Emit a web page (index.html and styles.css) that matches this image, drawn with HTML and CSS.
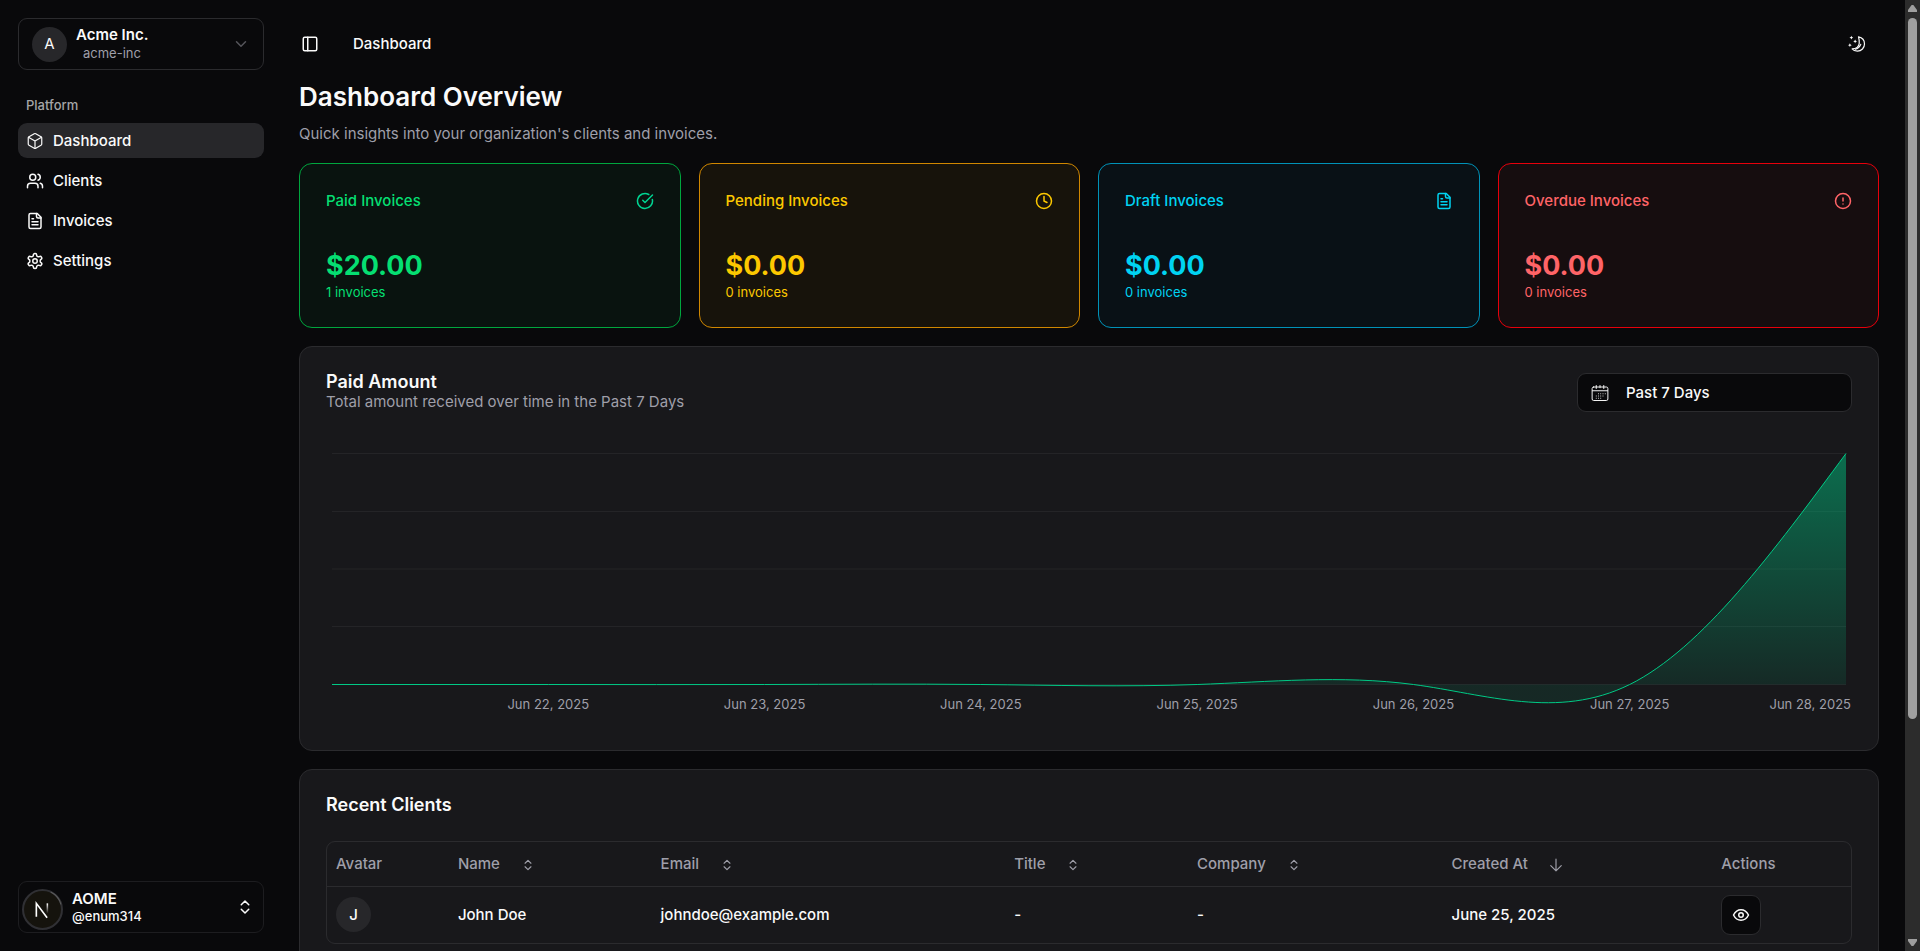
FILE: index.html
```html
<!DOCTYPE html>
<html lang="en">
<head>
<meta charset="utf-8">
<meta name="viewport" content="width=device-width, initial-scale=1">
<title>Dashboard</title>
<link rel="stylesheet" href="styles.css">
</head>
<body>
<svg class="sprite" aria-hidden="true">
  <symbol id="i-sort" viewBox="0 0 24 24"><path d="m7 15 5 5 5-5M7 9l5-5 5 5"/></symbol>
  <symbol id="i-file" viewBox="0 0 24 24"><path d="M15 2H6a2 2 0 0 0-2 2v16a2 2 0 0 0 2 2h12a2 2 0 0 0 2-2V7Z"/><path d="M14 2v4a2 2 0 0 0 2 2h4M10 9H8M16 13H8M16 17H8"/></symbol>
</svg>
<div class="app">
  <aside class="sidebar">
    <button class="org" type="button">
      <span class="avatar">A</span>
      <span class="org-text"><span class="strong">Acme Inc.</span><span class="org-slug">acme-inc</span></span>
      <svg class="icon dim" viewBox="0 0 24 24"><path d="m6 9 6 6 6-6"/></svg>
    </button>
    <nav class="nav">
      <h2 class="nav-label">Platform</h2>
      <a class="nav-item active" href="#"><svg class="icon thin" viewBox="0 0 24 24"><path d="M21 8a2 2 0 0 0-1-1.73l-7-4a2 2 0 0 0-2 0l-7 4A2 2 0 0 0 3 8v8a2 2 0 0 0 1 1.73l7 4a2 2 0 0 0 2 0l7-4A2 2 0 0 0 21 16Z"/><path d="m3.3 7 8.7 5 8.7-5M12 22V12"/></svg>Dashboard</a>
      <a class="nav-item" href="#"><svg class="icon" viewBox="0 0 24 24"><path d="M16 21v-2a4 4 0 0 0-4-4H6a4 4 0 0 0-4 4v2"/><circle cx="9" cy="7" r="4"/><path d="M22 21v-2a4 4 0 0 0-3-3.87M16 3.13a4 4 0 0 1 0 7.75"/></svg>Clients</a>
      <a class="nav-item" href="#"><svg class="icon"><use href="#i-file"/></svg>Invoices</a>
      <a class="nav-item" href="#"><svg class="icon" viewBox="0 0 24 24"><path d="M12.22 2h-.44a2 2 0 0 0-2 2v.18a2 2 0 0 1-1 1.73l-.43.25a2 2 0 0 1-2 0l-.15-.08a2 2 0 0 0-2.73.73l-.22.38a2 2 0 0 0 .73 2.73l.15.1a2 2 0 0 1 1 1.72v.51a2 2 0 0 1-1 1.74l-.15.09a2 2 0 0 0-.73 2.73l.22.38a2 2 0 0 0 2.73.73l.15-.08a2 2 0 0 1 2 0l.43.25a2 2 0 0 1 1 1.73V20a2 2 0 0 0 2 2h.44a2 2 0 0 0 2-2v-.18a2 2 0 0 1 1-1.73l.43-.25a2 2 0 0 1 2 0l.15.08a2 2 0 0 0 2.73-.73l.22-.39a2 2 0 0 0-.73-2.73l-.15-.08a2 2 0 0 1-1-1.74v-.5a2 2 0 0 1 1-1.74l.15-.09a2 2 0 0 0 .73-2.73l-.22-.38a2 2 0 0 0-2.73-.73l-.15.08a2 2 0 0 1-2 0l-.43-.25a2 2 0 0 1-1-1.73V4a2 2 0 0 0-2-2z"/><circle cx="12" cy="12" r="3"/></svg>Settings</a>
    </nav>
    <button class="user" type="button">
      <svg class="user-avatar" viewBox="0 0 40 40">
        <defs><linearGradient id="n-fade" x1="0" y1="0" x2="0" y2="1"><stop offset="0" stop-color="#fff"/><stop offset="1" stop-color="#fff" stop-opacity="0"/></linearGradient></defs>
        <circle cx="20" cy="20" r="19" fill="#15130d" stroke="#303034" stroke-width="2"/>
        <path d="M28 3a19 19 0 0 1 10 12" fill="none" stroke="#5b5b5b" stroke-width="1"/>
        <path d="M14 27V14L24.500 28" fill="none" stroke="#fff" stroke-width="1.600"/>
        <rect x="24" y="14" width="1.500" height="10" fill="url(#n-fade)"/>
      </svg>
      <span class="user-text"><span class="strong">AOME</span><span class="user-handle">@enum314</span></span>
      <svg class="icon"><use href="#i-sort"/></svg>
    </button>
  </aside>

  <main class="main">
    <header class="topbar">
      <button class="icon-btn" type="button" aria-label="Toggle sidebar"><svg class="icon" viewBox="0 0 24 24"><rect x="3" y="3" width="18" height="18" rx="2"/><path d="M9 3v18"/></svg></button>
      <span class="crumb">Dashboard</span>
      <button class="icon-btn theme" type="button" aria-label="Toggle theme"><svg class="icon thin" viewBox="0 0 24 24"><path d="M14 2.500C19 3.500 22 7 22 12c0 5-4 9.500-9.500 9.500-3 0-5.500-1-7-3 5 0 9-2.500 9.500-7.500.3-3-.3-6-1-8.500Z"/><path d="M17 12.500c-1 3-3.500 5.500-7 6.500"/><path class="solid" d="m4.500 1 .8 1.700L7 3.500l-1.700.8L4.500 6l-.8-1.700L2 3.500l1.700-.8ZM9.500 6l.8 1.700 1.700.8-1.700.8L9.500 11l-.8-1.700L7 8.500l1.700-.8ZM2.500 11l.8 1.700 1.700.8-1.700.8-.8 1.700-.8-1.700L0 13.500l1.700-.8Z"/></svg></button>
    </header>

    <div class="intro">
      <h1>Dashboard Overview</h1>
      <p>Quick insights into your organization's clients and invoices.</p>
    </div>

    <section class="stats">
      <article class="stat paid">
        <div class="stat-head"><h3>Paid Invoices</h3><svg class="icon" viewBox="0 0 24 24"><path d="M21.800 10A10 10 0 1 1 17 3.340"/><path d="m9 11 3 3L22 4"/></svg></div>
        <strong>$20.00</strong><p>1 invoices</p>
      </article>
      <article class="stat pending">
        <div class="stat-head"><h3>Pending Invoices</h3><svg class="icon" viewBox="0 0 24 24"><circle cx="12" cy="12" r="10"/><path d="M12 6v6l4 2"/></svg></div>
        <strong>$0.00</strong><p>0 invoices</p>
      </article>
      <article class="stat draft">
        <div class="stat-head"><h3>Draft Invoices</h3><svg class="icon"><use href="#i-file"/></svg></div>
        <strong>$0.00</strong><p>0 invoices</p>
      </article>
      <article class="stat overdue">
        <div class="stat-head"><h3>Overdue Invoices</h3><svg class="icon" viewBox="0 0 24 24"><circle cx="12" cy="12" r="10"/><path d="M12 8v4M12 16h.01"/></svg></div>
        <strong>$0.00</strong><p>0 invoices</p>
      </article>
    </section>

    <section class="card">
      <div class="card-head">
        <div>
          <h2>Paid Amount</h2>
          <p>Total amount received over time in the Past 7 Days</p>
        </div>
        <button class="range" type="button">
          <svg class="icon" viewBox="0 0 24 24"><rect x="1.500" y="4" width="21" height="18" rx="2"/><path d="M2 9h20M7 2v4M12 2v3M17 2v4"/><path d="M10 13h.01M13 13h.01M16 13h.01M19 13h.01M7 16h.01M10 16h.01M13 16h.01M16 16h.01M7 19h.01M10 19h.01M13 19h.01"/></svg>
          Past 7 Days
        </button>
      </div>
      <div class="chart">
        <svg class="plot" viewBox="0 -0.500 1512 231" preserveAspectRatio="none" role="img" aria-label="Paid amount per day">
          <defs><linearGradient id="area-fill" x1="0" y1="0" x2="0" y2="1"><stop offset="0.050" stop-color="#00bc7d" stop-opacity="0.500"/><stop offset="0.950" stop-color="#00bc7d" stop-opacity="0.100"/></linearGradient></defs>
          <path class="grid-line" d="M0 0H1512M0 58H1512M0 115.500H1512M0 173H1512M0 231H1512"/>
          <path fill="url(#area-fill)" d="M0 231C72 230.970 144 230.950 216 231C288 231.050 360 231.190 432 231C504 230.810 576 230.310 648 231C720 231.690 792 233.570 864 231C936 228.430 1008 221.420 1080 231C1152 240.580 1224 266.740 1296 231C1368 195.260 1440 97.630 1512 0V231Z"/>
          <path class="curve" d="M0 231C72 230.970 144 230.950 216 231C288 231.050 360 231.190 432 231C504 230.810 576 230.310 648 231C720 231.690 792 233.570 864 231C936 228.430 1008 221.420 1080 231C1152 240.580 1224 266.740 1296 231C1368 195.260 1440 97.630 1512 0"/>
        </svg>
        <div class="axis">
          <span></span><span>Jun 22, 2025</span><span>Jun 23, 2025</span><span>Jun 24, 2025</span><span>Jun 25, 2025</span><span>Jun 26, 2025</span><span>Jun 27, 2025</span><span class="last">Jun 28, 2025</span>
        </div>
      </div>
    </section>

    <section class="card">
      <h2>Recent Clients</h2>
      <div class="table-wrap">
        <table>
          <colgroup><col class="c-avatar"><col class="c-name"><col class="c-email"><col class="c-title"><col class="c-company"><col class="c-created"><col></colgroup>
          <thead>
            <tr>
              <th>Avatar</th>
              <th><button type="button">Name<svg class="icon sort"><use href="#i-sort"/></svg></button></th>
              <th><button type="button">Email<svg class="icon sort"><use href="#i-sort"/></svg></button></th>
              <th><button type="button">Title<svg class="icon sort"><use href="#i-sort"/></svg></button></th>
              <th><button type="button">Company<svg class="icon sort"><use href="#i-sort"/></svg></button></th>
              <th><button type="button">Created At<svg class="icon sort" viewBox="0 0 24 24"><path d="M12 2v20M3 13l9 9 9-9"/></svg></button></th>
              <th>Actions</th>
            </tr>
          </thead>
          <tbody>
            <tr>
              <td><span class="avatar">J</span></td>
              <td>John Doe</td>
              <td>johndoe@example.com</td>
              <td>-</td>
              <td>-</td>
              <td>June 25, 2025</td>
              <td><button class="view" type="button" aria-label="View client"><svg class="icon" viewBox="0 0 24 24"><path d="M2 12c2-4 5.500-7 10-7s8 3 10 7c-2 4-5.500 7-10 7s-8-3-10-7Z"/><circle cx="12" cy="12" r="3"/></svg></button></td>
            </tr>
          </tbody>
        </table>
      </div>
    </section>
  </main>

  <div class="scrollbar" aria-hidden="true">
    <span class="arrow up"></span>
    <span class="thumb"></span>
    <span class="arrow"></span>
  </div>
</div>
</body>
</html>
```
FILE: styles.css
```css
:root {
  --bg: #09090b;
  --card: #18181b;
  --muted: #27272a;
  --border: #2b2b2e;
  --text: #fafafa;
  --text-muted: #9f9fa9;
}

* {
  box-sizing: border-box;
}

body {
  margin: 0;
  background: var(--bg);
  color: var(--text);
  font: 400 15px/22px Inter, sans-serif;
}

h1, h2, h3, p {
  margin: 0;
}

button {
  margin: 0;
  padding: 0;
  border: 0;
  background: none;
  color: inherit;
  font: inherit;
  text-align: left;
  cursor: pointer;
}

.sprite {
  display: none;
}

.icon {
  flex: none;
  width: 18px;
  height: 18px;
  fill: none;
  stroke: currentColor;
  stroke-width: 2;
  stroke-linecap: round;
  stroke-linejoin: round;
}

.icon.thin {
  stroke-width: 1.6;
}

.icon .solid {
  fill: currentColor;
  stroke: none;
}

.app {
  display: grid;
  grid-template-columns: 282px minmax(0, 1fr) 15px;
  height: 100vh;
  overflow: hidden;
}

/* Sidebar */
.sidebar {
  display: flex;
  flex-direction: column;
  min-height: 0;
  padding: 18px;
}

.org,
.user {
  display: flex;
  align-items: center;
  border: 1px solid var(--border);
  border-radius: 9px;
  height: 52px;
}

.org {
  gap: 9px;
  padding: 0 13px;
}

.user {
  gap: 9px;
  margin-top: auto;
  padding: 0 9px 0 3px;
  border-color: #1d1d20;
}

.avatar {
  display: flex;
  flex: none;
  align-items: center;
  justify-content: center;
  width: 35px;
  height: 35px;
  border-radius: 50%;
  background: var(--muted);
}

.org-text,
.user-text {
  display: flex;
  flex: 1;
  flex-direction: column;
}

.strong {
  font-weight: 600;
  line-height: 19px;
}

.org-slug {
  padding-left: 7px;
  color: var(--text-muted);
  font-size: 13px;
  line-height: 19px;
}

.dim {
  color: #55555b;
}

.user-avatar {
  flex: none;
  width: 41px;
  height: 41px;
  margin-top: 4px;
}

.user-handle {
  font-size: 13px;
  font-weight: 500;
  line-height: 17px;
}

.nav {
  display: flex;
  flex-direction: column;
  gap: 5px;
  margin-top: 22px;
}

.nav-label {
  padding-left: 8px;
  color: #a5a5a7;
  font-size: 13px;
  font-weight: 500;
  line-height: 26px;
}

.nav-item {
  display: flex;
  align-items: center;
  gap: 9px;
  height: 35px;
  padding: 0 8px;
  border-radius: 9px;
  color: var(--text);
  font-weight: 500;
  text-decoration: none;
}

.nav-item.active {
  background: var(--muted);
}

/* Main column */
.main {
  display: flex;
  flex-direction: column;
  gap: 18px;
  min-height: 0;
  overflow: hidden;
  padding: 0 26px 0 17px;
}

.main > * {
  flex: none;
}

.topbar {
  display: flex;
  align-items: center;
  gap: 34px;
  height: 52px;
  margin-top: 18px;
  margin-bottom: -9px;
}

.icon-btn {
  display: flex;
  margin-left: 2px;
}

.crumb {
  font-weight: 500;
}

.theme {
  margin-left: auto;
  margin-right: 13px;
}

.intro h1 {
  font-size: 26px;
  font-weight: 600;
  line-height: 36px;
}

.intro p {
  margin-top: 8px;
  color: var(--text-muted);
}

.stats {
  display: grid;
  grid-template-columns: repeat(4, minmax(0, 1fr));
  gap: 18px;
}

.stat {
  padding: 26px;
  border: 1px solid;
  border-radius: 13px;
}

.stat-head {
  display: flex;
  align-items: center;
  justify-content: space-between;
  margin-bottom: 36px;
}

.stat h3 {
  font-size: 15px;
  font-weight: 500;
}

.stat strong {
  display: block;
  font-size: 27px;
  font-weight: 700;
  line-height: 35px;
}

.stat p {
  font-size: 13px;
  line-height: 18px;
}

.paid { background: #09130f; border-color: #00a63e; color: #05df72; }
.paid .icon { color: #00d492; }
.pending { background: #17130b; border-color: #d08700; color: #fcc800; }
.draft { background: #091116; border-color: #0092b8; color: #00d3f2; }
.overdue { background: #160d0f; border-color: #e7000b; color: #ff6467; }

.card {
  padding: 26px;
  border: 1px solid var(--border);
  border-radius: 13px;
  background: var(--card);
}

.card h2 {
  font-size: 18px;
  font-weight: 600;
  line-height: 18px;
}

.card-head {
  display: flex;
  justify-content: space-between;
}

.card-head p {
  color: var(--text-muted);
}

.range {
  display: flex;
  align-items: center;
  gap: 17px;
  width: 275px;
  height: 39px;
  padding: 0 13px;
  border: 1px solid var(--border);
  border-radius: 9px;
  background: var(--bg);
  font-weight: 500;
}

.range .icon {
  stroke-width: 1.3;
}

.chart {
  margin: 40px 6px 0;
}

.plot {
  display: block;
  width: 100%;
  height: 231px;
  overflow: visible;
}

.grid-line,
.curve {
  fill: none;
  stroke: #242427;
  vector-effect: non-scaling-stroke;
}

.curve {
  stroke: #00c985;
}

.axis {
  display: grid;
  grid-template-columns: minmax(0, 1fr) repeat(6, minmax(0, 2fr)) minmax(0, 1fr);
  padding: 11px 0;
  color: var(--text-muted);
  font-size: 13px;
  line-height: 18px;
  text-align: center;
  white-space: nowrap;
}

.axis .last {
  margin-right: -5px;
  text-align: right;
}

/* Clients table */
.table-wrap {
  margin-top: 27px;
  border: 1px solid var(--border);
  border-radius: 9px;
}

table {
  width: 100%;
  border-collapse: collapse;
  table-layout: fixed;
}

.c-avatar { width: 8%; }
.c-name { width: 13.3%; }
.c-email { width: 23.2%; }
.c-title { width: 12%; }
.c-company { width: 16.7%; }
.c-created { width: 17.7%; }

th,
td {
  padding: 0 9px;
  font-weight: 500;
  text-align: left;
}

th {
  height: 44px;
  border-bottom: 1px solid var(--border);
  color: var(--text-muted);
}

td {
  height: 57px;
}

th button {
  display: flex;
  align-items: center;
  gap: 21px;
}

.sort {
  width: 14px;
  height: 14px;
  margin-top: 2px;
}

.view {
  display: flex;
  align-items: center;
  justify-content: center;
  width: 40px;
  height: 40px;
  border: 1px solid var(--border);
  border-radius: 9px;
  background: var(--bg);
}

/* Page scrollbar */
.scrollbar {
  display: flex;
  flex-direction: column;
  align-items: center;
  padding: 5px 0;
  background: #2c2c2c;
}

.thumb {
  width: 9px;
  height: 74.5%;
  margin-top: 6px;
  border-radius: 5px;
  background: #9f9f9f;
}

.arrow {
  width: 9px;
  height: 7px;
  margin-top: auto;
  background: #9f9f9f;
  clip-path: polygon(0 0, 100% 0, 100% 30%, 60% 100%, 40% 100%, 0 30%);
}

.arrow.up {
  margin-top: 0;
  clip-path: polygon(0 100%, 100% 100%, 100% 70%, 60% 0, 40% 0, 0 70%);
}
```
